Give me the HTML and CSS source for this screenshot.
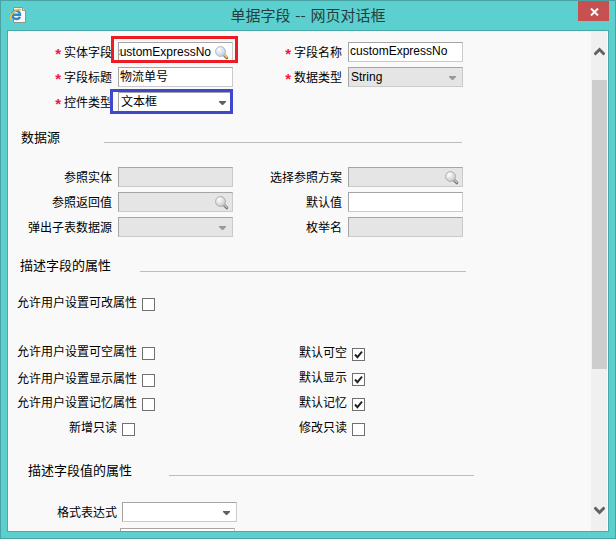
FILE: index.html
```html
<!DOCTYPE html>
<html lang="zh-CN">
<head>
<meta charset="utf-8">
<title>单据字段 -- 网页对话框</title>
<link rel="stylesheet" href="styles.css">
</head>
<body>
<svg class="defs" width="0" height="0" aria-hidden="true">
  <defs>
    <radialGradient id="lens" cx="35%" cy="30%" r="75%"><stop offset="0" stop-color="#fff"/><stop offset="1" stop-color="#b9cdec"/></radialGradient>
    <radialGradient id="lens-off" cx="35%" cy="30%" r="75%"><stop offset="0" stop-color="#fff"/><stop offset="1" stop-color="#c8c8c8"/></radialGradient>
    <symbol id="search" viewBox="0 0 14 14">
      <path d="M8.8 8.8L11.8 11.8" stroke="#8a6a34" stroke-width="3" stroke-linecap="round"/>
      <path d="M9.2 8.7L11.8 11.2" stroke="#f5c65c" stroke-width="1.7" stroke-linecap="round"/>
      <circle cx="5.5" cy="5.5" r="4.9" fill="url(#lens)" stroke="#b0b6c0"/>
    </symbol>
    <symbol id="search-off" viewBox="0 0 14 14">
      <path d="M8.8 8.8L11.8 11.8" stroke="#757575" stroke-width="3" stroke-linecap="round"/>
      <path d="M9.2 8.7L11.8 11.2" stroke="#c4c4c4" stroke-width="1.4" stroke-linecap="round"/>
      <circle cx="5.5" cy="5.5" r="4.9" fill="url(#lens-off)" stroke="#acacac"/>
    </symbol>
    <symbol id="caret" viewBox="0 0 7 4"><path d="M0 0H7V1L4 4H3L0 1Z" fill="currentColor"/></symbol>
    <symbol id="check" viewBox="0 0 11 11"><path d="M2 5.5L4.4 8.2L9 2.6" fill="none" stroke="#222" stroke-width="1.9"/></symbol>
  </defs>
</svg>
<div class="window">
  <header class="titlebar">
    <svg class="app-icon" width="17" height="17" viewBox="0 0 17 17">
      <path d="M3.5 .5H12.5L15.5 3.5V15.5H3.5Z" fill="#f8f8f6" stroke="#8b9693"/>
      <path d="M12.5 .5V3.5H15.5" fill="#ddd" stroke="#8b9693"/>
      <path d="M2.8 7.8H10C10 2.4 2.3 2.4 2.3 7.8C2.3 12.8 8.6 13 10 9.8" fill="none" stroke="#2b8bd6" stroke-width="2.4"/>
      <path d="M1.6 12.8C-2 10 6 0 11 3.2" fill="none" stroke="#eec22b" stroke-width="1.7"/>
    </svg>
    <h1>单据字段 -- 网页对话框</h1>
    <button class="close" aria-label="关闭"><svg width="9" height="8" viewBox="0 0 9 8"><path d="M1 .5L8 7.5M8 .5L1 7.5" stroke="#fff" stroke-width="1.9"/></svg></button>
  </header>
  <main class="client">
    <div class="form">
      <section class="fields basic">
        <label class="required">实体字段</label>
        <div class="field mark red"><span class="clip">customExpressNo</span><svg class="search"><use href="#search"/></svg></div>
        <label class="required">字段名称</label>
        <div class="field high"><span>customExpressNo</span></div>
        <label class="required">字段标题</label>
        <div class="field"><span>物流单号</span></div>
        <label class="required">数据类型</label>
        <div class="field off"><span>String</span><svg class="caret"><use href="#caret"/></svg></div>
        <label class="required">控件类型</label>
        <div class="field mark blue"><span>文本框</span><svg class="caret"><use href="#caret"/></svg></div>
      </section>

      <h2 class="source-title">数据源</h2>
      <section class="fields source">
        <label>参照实体</label><div class="field off"></div>
        <label>选择参照方案</label><div class="field off"><svg class="search"><use href="#search-off"/></svg></div>
        <label>参照返回值</label><div class="field off"><svg class="search"><use href="#search-off"/></svg></div>
        <label>默认值</label><div class="field"></div>
        <label>弹出子表数据源</label><div class="field off"><svg class="caret"><use href="#caret"/></svg></div>
        <label>枚举名</label><div class="field off"></div>
      </section>

      <h2 class="attr-title">描述字段的属性</h2>
      <section class="options">
        <div class="option-column">
          <label class="option first">允许用户设置可改属性<i class="box"></i></label>
          <label class="option second">允许用户设置可空属性<i class="box"></i></label>
          <label class="option third">允许用户设置显示属性<i class="box"></i></label>
          <label class="option">允许用户设置记忆属性<i class="box"></i></label>
          <label class="option short">新增只读<i class="box"></i></label>
        </div>
        <div class="option-column defaults">
          <label class="option">默认可空<i class="box"><svg><use href="#check"/></svg></i></label>
          <label class="option">默认显示<i class="box"><svg><use href="#check"/></svg></i></label>
          <label class="option">默认记忆<i class="box"><svg><use href="#check"/></svg></i></label>
          <label class="option">修改只读<i class="box"></i></label>
        </div>
      </section>

      <h2 class="value-title">描述字段值的属性</h2>
      <section class="format">
        <label>格式表达式</label>
        <div class="field"><svg class="caret"><use href="#caret"/></svg></div>
      </section>
      <div class="field next"></div>
    </div>
    <div class="scrollbar">
      <svg width="11" height="9" viewBox="0 0 11 9"><path d="M.5 7.5L5.5 2.5L10.5 7.5" fill="none" stroke="#606060" stroke-width="3"/></svg>
      <div class="thumb"></div>
      <svg class="down" width="11" height="9" viewBox="0 0 11 9"><path d="M.5 1.5L5.5 6.5L10.5 1.5" fill="none" stroke="#606060" stroke-width="3"/></svg>
    </div>
  </main>
</div>
</body>
</html>
```
FILE: styles.css
```css
* { box-sizing: border-box; }
body {
  margin: 0;
  overflow: hidden;
  font: 12px/20px "Liberation Sans", "Noto Sans CJK SC", sans-serif;
  color: #000;
}
.defs { position: absolute; }
.window {
  width: 616px;
  height: 539px;
  padding: 0 6px 6px;
  border: 1px solid #4aa3a3;
  background: #5bd0cf;
}
.titlebar {
  display: grid;
  grid-template-columns: 50px 1fr 50px;
  height: 29px;
}
.app-icon { margin: 6px 0 0 3px; }
h1 {
  margin: 0;
  font: 15px/27px "Noto Sans CJK SC", sans-serif;
  word-spacing: 1.5px;
  text-align: center;
  color: #243e40;
}
.close {
  display: flex;
  align-items: center;
  justify-content: center;
  justify-self: end;
  width: 31px;
  height: 20px;
  padding: 1px 0 0 1px;
  border: 0;
  background: #c75050;
}
.client {
  display: flex;
  width: 602px;
  height: 502px;
  border: 1px solid #49a9a8;
  background: #f9f9f9;
  overflow: hidden;
}
.form { flex: 1; overflow: hidden; }
.fields {
  display: grid;
  grid-template-columns: 104px 115px 103px 115px;
  grid-auto-rows: 20px;
  gap: 5px 6px;
}
.basic { padding-top: 11px; }
.source { padding-top: 20px; }
.fields > label { line-height: 22px; text-align: right; white-space: nowrap; }
.required::before {
  content: "*";
  margin-right: 3px;
  font-size: 15px;
  font-weight: bold;
  line-height: 10px;
  vertical-align: -2px;
  color: #f5153f;
}
.field {
  position: relative;
  display: flex;
  align-items: center;
  width: 115px;
  height: 20px;
  padding-left: 1px;
  border: 1px solid #cbcbcb;
  border-top-color: #a5a5a5;
  border-left-color: #a5a5a5;
  background: #fff;
  line-height: 18px;
  white-space: nowrap;
}
.field.off { padding-left: 2px; background: #e5e5e5; }
.field.high { padding-bottom: 2px; }
.clip { display: flex; justify-content: flex-end; width: 92px; overflow: hidden; }
.field.red { padding-left: 0; }
.mark::after {
  content: "";
  position: absolute;
  inset: -7px -6px -2px -8px;
  border: 3px solid #ed1c24;
}
.mark.blue { padding-left: 2px; }
.mark.blue::after { inset: -4px -1px -3px -9px; border-color: #3f48cc; }
.search { width: 14px; height: 14px; margin: 2px 3px 0 auto; }
.caret { width: 7px; height: 4px; margin: 2px 6px 0 auto; color: #606060; }
.off .caret { color: #999; }
h2 {
  display: flex;
  align-items: flex-end;
  height: 20px;
  font-size: 13px;
  font-weight: normal;
  line-height: 19px;
}
h2::after { content: ""; height: 1px; background: #bdbdbd; }
.source-title { margin: 15px 0 0 13px; }
.source-title::after { width: 358px; margin: 0 0 4px 44px; }
.attr-title { margin: 18px 0 0 12px; }
.attr-title::after { width: 326px; margin: 0 0 3px 29px; }
.value-title { margin: 18px 0 0 20px; }
.value-title::after { width: 305px; margin: 0 0 4px 37px; }
.options { display: flex; justify-content: space-between; width: 357px; padding-top: 17px; }
.option-column { width: 147px; }
.option { display: flex; justify-content: flex-end; height: 20px; margin-bottom: 5px; line-height: 22px; }
.option.first { margin-bottom: 29px; }
.option.second { margin-bottom: 7px; }
.option.third { margin-bottom: 4px; }
.option.short { width: 127px; margin-bottom: 0; }
.defaults { padding-top: 50px; }
.box {
  width: 13px;
  height: 13px;
  margin: 6px 0 0 5px;
  border: 1px solid #707070;
  background: #fff;
}
.option-column { margin-right: 0; }
.box svg { display: block; width: 11px; height: 11px; }
.format { display: flex; gap: 5px; padding-top: 22px; }
.format label { width: 109px; line-height: 22px; text-align: right; }
.format .field { margin-bottom: 2px; }
.next { margin: 4px 0 0 112px; }
.scrollbar {
  display: flex;
  flex-direction: column;
  align-items: center;
  width: 17px;
  padding: 16px 0;
  border-right: 1px solid #fff;
  background: #f0f0f0;
}
.thumb { width: 15px; height: 289px; margin-top: 24px; background: #cdcdcd; }
.down { margin-top: auto; }
```
